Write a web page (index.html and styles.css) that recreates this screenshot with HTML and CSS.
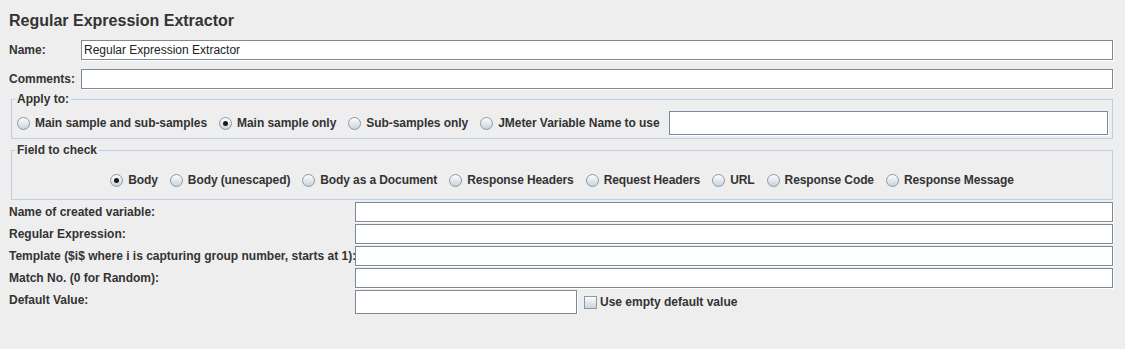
FILE: index.html
```html
<!DOCTYPE html>
<html lang="en">

<head>
    <meta charset="UTF-8">
    <title>Regular Expression Extractor</title>
    <link rel="stylesheet" href="styles.css">
</head>

<body>
    <div class="panel">
        <h1 class="title">Regular Expression Extractor</h1>

        <div class="name-grid">
            <label>Name:</label>
            <input class="field" type="text" value="Regular Expression Extractor">
            <label>Comments:</label>
            <input class="field" type="text">
        </div>

        <fieldset class="group apply">
            <legend>Apply to:</legend>
            <div class="radio-row">
                <label class="radio"><span class="dot"></span>Main sample and sub-samples</label>
                <label class="radio"><span class="dot checked"></span>Main sample only</label>
                <label class="radio"><span class="dot"></span>Sub-samples only</label>
                <label class="radio"><span class="dot"></span>JMeter Variable Name to use</label>
                <input class="field var-name" type="text">
            </div>
        </fieldset>

        <fieldset class="group check">
            <legend>Field to check</legend>
            <div class="radio-row centered">
                <label class="radio"><span class="dot checked"></span>Body</label>
                <label class="radio"><span class="dot"></span>Body (unescaped)</label>
                <label class="radio"><span class="dot"></span>Body as a Document</label>
                <label class="radio"><span class="dot"></span>Response Headers</label>
                <label class="radio"><span class="dot"></span>Request Headers</label>
                <label class="radio"><span class="dot"></span>URL</label>
                <label class="radio"><span class="dot"></span>Response Code</label>
                <label class="radio"><span class="dot"></span>Response Message</label>
            </div>
        </fieldset>

        <div class="form-grid">
            <label>Name of created variable:</label>
            <input class="field" type="text">
            <label>Regular Expression:</label>
            <input class="field" type="text">
            <label>Template ($i$ where i is capturing group number, starts at 1):</label>
            <input class="field" type="text">
            <label>Match No. (0 for Random):</label>
            <input class="field" type="text">
            <label>Default Value:</label>
            <div class="default-row">
                <input class="field default" type="text">
                <label class="checkbox"><span class="box"></span>Use empty default value</label>
            </div>
        </div>
    </div>
</body>

</html>
```

FILE: styles.css
```css
body {
    margin: 0;
    background: #eeeeee;
    font-family: "Liberation Sans", Arial, sans-serif;
    font-size: 12px;
    font-weight: bold;
    color: #333;
}

.panel {
    padding: 0 12px 0 9px;
}

.title {
    margin: 0;
    padding-top: 11px;
    font-size: 16px;
    line-height: 20px;
    color: #333;
}

.field {
    box-sizing: border-box;
    height: 20px;
    margin: 0;
    padding: 0 2px;
    border: 1px solid #7a8a99;
    box-shadow: 1px 1px 0 #fff;
    background: #fff;
    font-family: "Liberation Sans", Arial, sans-serif;
    font-size: 12px;
    font-weight: normal;
    color: #222;
    outline: none;
}

.name-grid {
    display: grid;
    grid-template-columns: 72px 1fr;
    row-gap: 9px;
    align-items: center;
    margin-top: 9px;
}

.name-grid .field {
    width: 1032px;
}

.group {
    margin: 0 0 0 2px;
    padding: 0;
    border: 1px solid #b8cfe5;
}

.group legend {
    margin-left: 3px;
    padding: 0 2px;
    line-height: 14px;
}

.apply {
    margin-top: 3px;
}

.check {
    margin-top: 4px;
}

.radio-row {
    display: flex;
    align-items: center;
    gap: 12px;
}

.apply .radio-row {
    padding: 5px 4px 3px 5px;
}

.apply .radio {
    letter-spacing: -0.05px;
}

.check .radio-row {
    justify-content: center;
    height: 18px;
    padding: 14px 0 10px;
}

.radio {
    display: flex;
    align-items: center;
    white-space: nowrap;
    letter-spacing: -0.1px;
}

.dot {
    box-sizing: border-box;
    width: 13px;
    height: 13px;
    margin-right: 5px;
    border: 1px solid #8a98a6;
    border-radius: 50%;
    background: linear-gradient(#fdfdfe, #c8d3df);
    display: flex;
    align-items: center;
    justify-content: center;
}

.dot.checked::after {
    content: "";
    width: 5px;
    height: 5px;
    border-radius: 50%;
    background: #1a1a1a;
}

.var-name {
    flex: 1;
    height: 24px;
    margin-left: -3px;
}

.form-grid {
    display: grid;
    grid-template-columns: 346px 1fr;
    grid-template-rows: 20px 20px 20px 20px 24px;
    row-gap: 2px;
    margin-top: 2px;
}

.form-grid label {
    line-height: 20px;
    white-space: nowrap;
}

.form-grid > .field {
    width: 758px;
}

.default-row {
    display: flex;
    align-items: center;
}

.field.default {
    width: 222px;
    height: 24px;
}

.checkbox {
    display: flex;
    align-items: center;
    margin-left: 7px;
}

.box {
    box-sizing: border-box;
    width: 13px;
    height: 13px;
    margin-right: 3px;
    border: 1px solid #8a98a6;
    background: linear-gradient(#fdfdfe, #c8d3df);
}
```
